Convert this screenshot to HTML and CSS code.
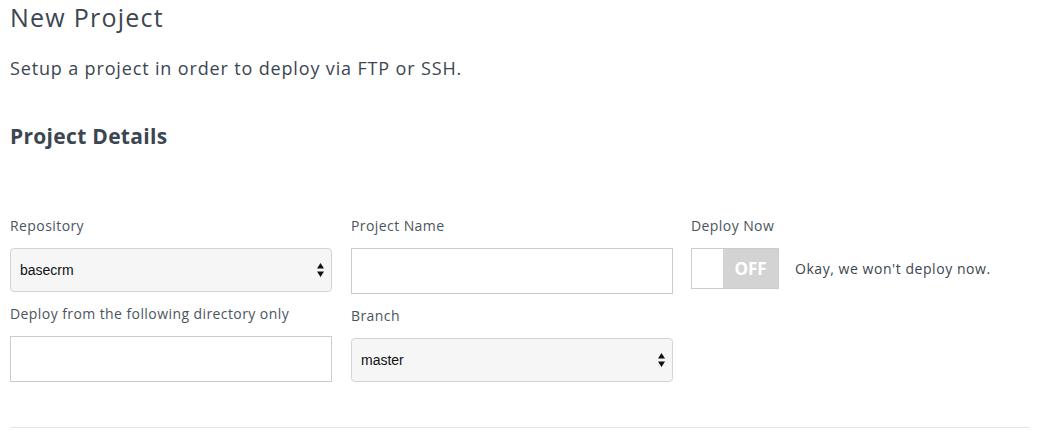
FILE: index.html
```html
<!DOCTYPE html>
<html>
<head>
<meta charset="utf-8">
<link rel="stylesheet" href="styles.css">
</head>
<body>
<div class="page">
  <h1 class="title">New Project</h1>
  <p class="subtitle">Setup a project in order to deploy via FTP or SSH.</p>
  <h2 class="section-title">Project Details</h2>
  <div class="form-grid">
    <div class="col">
      <div class="field">
        <label class="label">Repository</label>
        <div class="select">
          <span class="select-value">basecrm</span>
          <svg class="select-arrows" width="7" height="14" viewBox="0 0 7 14"><path d="M3.5 0 L7 5.5 L0 5.5 Z M0 8.5 L7 8.5 L3.5 14 Z" fill="#111"/></svg>
        </div>
      </div>
      <div class="field">
        <label class="label">Deploy from the following directory only</label>
        <input class="input" type="text">
      </div>
    </div>
    <div class="col">
      <div class="field">
        <label class="label">Project Name</label>
        <input class="input" type="text">
      </div>
      <div class="field">
        <label class="label">Branch</label>
        <div class="select">
          <span class="select-value">master</span>
          <svg class="select-arrows" width="7" height="14" viewBox="0 0 7 14"><path d="M3.5 0 L7 5.5 L0 5.5 Z M0 8.5 L7 8.5 L3.5 14 Z" fill="#111"/></svg>
        </div>
      </div>
    </div>
    <div class="col">
      <div class="field">
        <label class="label">Deploy Now</label>
        <div class="toggle-row">
          <div class="toggle">
            <span class="toggle-knob"></span>
            <span class="toggle-state">OFF</span>
          </div>
          <span class="toggle-note">Okay, we won't deploy now.</span>
        </div>
      </div>
    </div>
  </div>
  <hr class="divider">
</div>
</body>
</html>
```

FILE: styles.css
```css
html, body {
  margin: 0;
  padding: 0;
  background: #ffffff;
}

body {
  font-family: "Open Sans", "Noto Sans", sans-serif;
  color: #3b4651;
}

.page {
  padding: 0 23px 0 10px;
}

.title {
  margin: 0;
  padding-top: 0;
  font-size: 25px;
  line-height: 34px;
  font-weight: 400;
  letter-spacing: 1.25px;
  color: #3b4651;
}

.subtitle {
  margin: 21px 0 0 0;
  font-size: 18px;
  line-height: 26px;
  letter-spacing: 0.85px;
  color: #3b4651;
}

.section-title {
  margin: 40px 0 0 0;
  font-size: 21px;
  line-height: 30px;
  font-weight: 700;
  letter-spacing: 0.3px;
  color: #3b4651;
}

.form-grid {
  display: grid;
  grid-template-columns: 341px 340px 1fr;
  margin-top: 65px;
}

.field {
  display: flex;
  flex-direction: column;
  margin-bottom: 12px;
}

.label {
  font-size: 14px;
  line-height: 20px;
  margin-bottom: 12px;
  letter-spacing: 0.42px;
  color: #4a5560;
}

.input {
  box-sizing: border-box;
  width: 322px;
  height: 46px;
  margin: 0;
  border: 1px solid #cccccc;
  border-radius: 0;
  background: #ffffff;
  font: inherit;
}

.select {
  box-sizing: border-box;
  width: 322px;
  height: 44px;
  display: flex;
  align-items: center;
  justify-content: space-between;
  padding: 0 7px 0 9px;
  border: 1px solid #d4d4d4;
  border-radius: 4px;
  background: #f6f6f6;
}

.select-value {
  font-family: "Liberation Sans", Arial, sans-serif;
  font-size: 14px;
  color: #111111;
}

.select-arrows {
  display: block;
}

.toggle-row {
  display: flex;
  align-items: center;
  gap: 16px;
}

.toggle {
  box-sizing: border-box;
  width: 88px;
  height: 41px;
  display: flex;
  border: 1px solid #cccccc;
  background: #ffffff;
}

.toggle-knob {
  width: 31px;
  background: #ffffff;
}

.toggle-state {
  flex: 1;
  display: flex;
  align-items: center;
  justify-content: center;
  background: #d3d3d3;
  color: #ffffff;
  font-weight: 700;
  font-size: 17px;
}

.toggle-note {
  font-size: 14px;
  letter-spacing: 0.55px;
  color: #3b4651;
}

.divider {
  margin: 33px 0 0 0;
  border: 0;
  border-top: 1px solid #e6e6e6;
  height: 0;
}
```
